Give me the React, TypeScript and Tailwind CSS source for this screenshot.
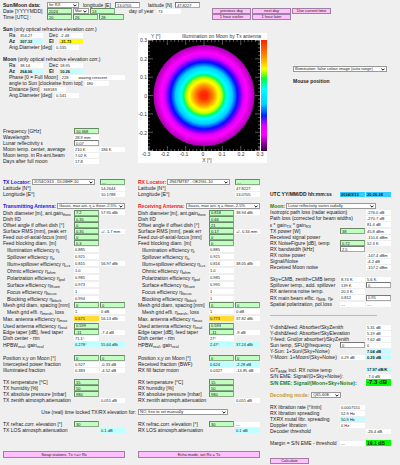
import React, { useId } from 'react';
import clsx from 'clsx';

type Kind = 'out' | 'in' | 'plain' | 'cyan' | 'cyanBold' | 'sky' | 'gold' | 'yellow' | 'green' | 'big';
type Cell = [Kind, string] | null;
type RowData = { label: React.ReactNode; a?: Cell; b?: Cell; tall?: boolean; indent?: boolean; labelClass?: string };

const kinds: Record<Kind, string> = {
  out: 'h-[5px] leading-[5px] bg-white text-[4px]',
  cyan: 'h-[5px] leading-[5px] bg-[#c0ffff] text-[4px]',
  cyanBold: 'h-[5px] leading-[5px] bg-[#c0ffff] font-bold text-[4px]',
  sky: 'h-[5px] leading-[5px] bg-[#33ccff] font-bold text-[4px]',
  gold: 'h-[5px] leading-[5px] bg-[#ffdd33] text-[4px]',
  yellow: 'h-[5px] leading-[5px] bg-[#ffff00] font-bold text-[4px]',
  green: 'h-[6px] leading-[6px] bg-[#00ff00] font-bold text-[5px]',
  big: 'h-[7px] leading-[7px] bg-[#00ff00] font-bold text-[6px]',
  in: 'bg-[#c0ffc0] border-t-[#668866] border-l-[#668866] border-r-[#88a888] border-b-[#88a888]',
  plain: 'bg-white border-t-[#777777] border-l-[#777777] border-r-[#aaaaaa] border-b-[#aaaaaa]',
};

const Box = ({ cell, id, name, className }: { cell: Cell; id?: string; name?: string; className?: string }) => {
  if (!cell) return <span className={className} />;
  const [kind, value] = cell;
  if (kind === 'in' || kind === 'plain') {
    return (
      <input
        id={id}
        aria-label={name}
        defaultValue={value}
        className={clsx('h-[6px] min-w-0 border px-px text-[4px] leading-[4px] text-[#222]', kinds[kind], className)}
      />
    );
  }
  return (
    <output className={clsx('block min-w-0 whitespace-nowrap pl-px text-[#222]', kinds[kind], className)}>
      {value}
    </output>
  );
};

const Row = ({ label, a = null, b = null, tall, indent, labelClass }: RowData) => {
  const id = useId();
  const aIsInput = a && (a[0] === 'in' || a[0] === 'plain');
  return (
    <div className={clsx('grid grid-cols-[minmax(0,1fr)_25px_25px] items-center gap-px', tall ? 'h-[7px]' : 'h-[6px]')}>
      <label htmlFor={id} className={clsx('whitespace-nowrap', indent && 'pl-1', labelClass)}>{label}</label>
      <Box cell={a} id={aIsInput ? id : undefined} />
      <Box cell={b} id={aIsInput ? undefined : id} name={aIsInput ? 'second value' : undefined} />
    </div>
  );
};

const Rows = ({ rows }: { rows: RowData[] }) => <>{rows.map((r, i) => <Row key={i} {...r} />)}</>;

const Select = ({ value, id, label, className }: { value: string; id?: string; label?: string; className?: string }) => (
  <span className={clsx('relative block', className)}>
    <select
      id={id}
      aria-label={label}
      className="block h-[6px] w-full appearance-none border border-[#999999] bg-white pl-px pr-[5px] text-[4px] leading-[4px] text-[#222]"
    >
      <option>{value}</option>
    </select>
    <svg viewBox="0 0 6 4" className="pointer-events-none absolute right-[2px] top-[2px] h-[3px] w-[4px]">
      <path d="M.7.7 3 3 5.3.7" fill="none" stroke="#111" strokeWidth="1.5" />
    </svg>
  </span>
);

const Button = ({ children, className }: { children: React.ReactNode; className?: string }) => (
  <button className={clsx('block border border-[#a080a0] bg-[#ffc0ff] text-center text-[4px] leading-[4px] text-[#222]', className)}>
    {children}
  </button>
);

const Sub = ({ children }: { children: React.ReactNode }) => (
  <sub className="relative bottom-[-1px] align-baseline text-[4px] leading-[0]">{children}</sub>
);

const eff = (name: string, sub: string) => <>{name} efficiency η<Sub>{sub}</Sub></>;

const ticks = Array.from({ length: 31 }, (_, i) => i);

const Plot = () => (
  <svg width="129" height="130" viewBox="0 0 129 130" className="font-[Liberation_Sans,sans-serif] text-[5px]" fill="#333">
    <defs>
      <radialGradient id="beam">
        <stop offset="0" stopColor="#ff2000" />
        <stop offset=".08" stopColor="#ff3000" />
        <stop offset=".2" stopColor="#ff9a00" />
        <stop offset=".29" stopColor="#ffff00" />
        <stop offset=".35" stopColor="#c0ff00" />
        <stop offset=".4" stopColor="#00ff60" />
        <stop offset=".46" stopColor="#00ffff" />
        <stop offset=".56" stopColor="#00d0ff" />
        <stop offset=".66" stopColor="#0010ff" />
        <stop offset=".71" stopColor="#6000ff" />
        <stop offset=".78" stopColor="#e000ff" />
        <stop offset=".85" stopColor="#ff00ff" />
        <stop offset="1" stopColor="#a800b0" />
      </radialGradient>
      <linearGradient id="scale" x2="0" y2="1">
        <stop offset="0" stopColor="#ff2000" />
        <stop offset=".15" stopColor="#ff9000" />
        <stop offset=".26" stopColor="#ffff00" />
        <stop offset=".31" stopColor="#80ff00" />
        <stop offset=".35" stopColor="#00ff40" />
        <stop offset=".44" stopColor="#00ffff" />
        <stop offset=".58" stopColor="#00d0ff" />
        <stop offset=".68" stopColor="#0020ff" />
        <stop offset=".77" stopColor="#e000ff" />
        <stop offset=".85" stopColor="#ff00ff" />
        <stop offset="1" stopColor="#300040" />
      </linearGradient>
    </defs>
    <rect width="129" height="130" fill="#fff" />
    <rect x="10" y="7" width="112" height="111" fill="#000" />
    <circle cx="66" cy="62.5" r="50.5" fill="url(#beam)" />
    <rect x="123" y="7" width="6" height="111" fill="url(#scale)" />
    {ticks.map((i) => {
      const len = i % 5 === 0 ? 5 : 2;
      const x = 11 + i * 3.67;
      const y = 7.5 + i * 3.67;
      return (
        <path
          key={i}
          d={`M${x} 7v${len}M${x} 118v${-len}M10 ${y}h${len}M122 ${y}h${-len}`}
          stroke="#fff"
          strokeWidth=".5"
          opacity=".7"
        />
      );
    })}
    <text x="13" y="5">Y [°]</text>
    <text x="44" y="5">Illumination on Moon by Tx antenna</text>
    {['0.3', '0.2', '0.1', '0', '-0.1', '-0.2'].map((t, i) => (
      <text key={t} x="9" y={9 + i * 18.5} textAnchor="end">{t}</text>
    ))}
    {['-0.3', '-0.2', '-0.1', '0', '0.1', '0.2', '0.3'].map((t, i) => (
      <text key={t} x={8 + i * 19} y="123" textAnchor="middle">{t}</text>
    ))}
    <text x="69" y="129" textAnchor="middle">X [°]</text>
  </svg>
);

const tempRows: RowData[] = [
  { label: 'Frequency [GHz]', a: ['in', '10.368'] },
  { label: 'Wavelength', a: ['out', '28.9 mm'] },
  { label: 'Lunar reflectivity ε', a: ['plain', '0.07'] },
  { label: 'Moon temp. center, average', a: ['out', '210 K'], b: ['out', '186 K'] },
  { label: 'Moon temp. in Rx-ant.beam', a: ['out', '7.02 K'] },
  { label: 'Days after full moon', a: ['out', '17.8'] },
];

type Station = {
  dir: string; locator: string; select: string; lat: string; lon: string; title: string; antenna: string; color: string;
  gain: [string, string]; fd: string; offset: string; rms: [string, string]; focus: string; block: string; spill: [string, string];
  surface: string; blocking: string; max: [string, string]; used: string; taper: string; center: string; hpbw: [string, string];
};

const tx: Station = {
  dir: 'TX', locator: 'TX Locator:', select: 'JO54CG13 - DL0SHF-10', lat: '54.2644', lon: '10.1788',
  title: 'Transmitting Antenna:', antenna: 'Gauss, max ant. η = theor.-2.5%', color: 'font-bold text-[#2020dd]',
  gain: ['7.2', '57.95 dBi'], fd: '0.35', offset: '0', rms: ['0.35', '+/- 1.7 mm'], focus: '0', block: '0.3',
  spill: ['0.815', '56.97 dBi'], surface: '0.973', blocking: '0.994', max: ['0.671', '56.13 dBi'], used: '0.599',
  taper: '-7.4 dB', center: '71.1°', hpbw: ['0.278°', '55.64 dBi'],
};

const rx: Station = {
  dir: 'RX', locator: 'RX Locator:', select: 'JN67MT87 - OE2IGL-10', lat: '47.8227', lon: '13.0705',
  title: 'Receiving Antenna:', antenna: 'Gauss, max ant. η = theor.-2.5%', color: 'font-bold text-[#ee1c1c]',
  gain: ['0.818', '38.94 dBi'], fd: '0.66', offset: '21', rms: ['0.17', '+/- 0.34 mm'], focus: '0', block: '0',
  spill: ['0.816', '38.05 dBi'], surface: '0.995', blocking: '1', max: ['0.773', '37.82 dBi'], used: '0.593',
  taper: '-9 dB', center: '27°', hpbw: ['2.47°', '37.24 dBi'],
};

const StationPanel = ({ s }: { s: Station }) => {
  const id = useId();
  return (
    <section className="min-w-0">
      <div className="grid h-[6px] grid-cols-[minmax(0,1fr)_25px] items-center gap-[5px]">
        <div className="flex items-center gap-px">
          <label htmlFor={id} className={clsx('whitespace-nowrap', s.color)}>{s.locator}</label>
          <Select id={id} value={s.select} className="min-w-0 flex-1" />
        </div>
        <Box cell={['in', '---']} name={`${s.dir} locator`} />
      </div>
      <Row label="Latitude [N°]" b={['out', s.lat]} />
      <Row label="Longitude [E°]" b={['out', s.lon]} />
      <div className="mt-[6px] flex h-[6px] items-center gap-px">
        <label htmlFor={id + 'a'} className={clsx('whitespace-nowrap', s.color)}>{s.title}</label>
        <Select id={id + 'a'} value={s.antenna} className="min-w-0 flex-1" />
      </div>
      <Rows
        rows={[
          { label: <>Dish diameter [m], ant.gain<Sub>theo</Sub></>, a: ['in', s.gain[0]], b: ['out', s.gain[1]], tall: true },
          { label: 'Dish f/D', a: ['in', s.fd] },
          { label: 'Offset angle if offset dish [°]', a: ['in', s.offset] },
          { label: 'Surface RMS [mm], peak err', a: ['in', s.rms[0]], b: ['out', s.rms[1]] },
          { label: 'Feed out-of-axial-focus [mm]', a: ['in', s.focus] },
          { label: 'Feed blocking diam. [m]', a: ['in', s.block] },
          { label: eff('Illumination', 'i'), a: ['out', '0.885'], tall: true, indent: true },
          { label: eff('Spillover', 's'), a: ['out', '0.921'], tall: true, indent: true },
          { label: eff('Illum+spillover', 'i+s'), a: ['out', s.spill[0]], b: ['out', s.spill[1]], tall: true, indent: true },
          { label: eff('Ohmic', 'ohm'), a: ['out', '1.0'], tall: true, indent: true },
          { label: eff('Polarization', 'pol'), a: ['out', '0.985'], tall: true, indent: true },
          { label: eff('Surface', 'Ruze'), a: ['out', s.surface], tall: true, indent: true },
          { label: eff('Focus', 'focus'), a: ['out', '1'], tall: true, indent: true },
          { label: eff('Blocking', 'block'), a: ['out', s.blocking], tall: true, indent: true },
          { label: 'Mesh grid diam, spacing [mm]', a: ['in', '0'], b: ['in', '0'] },
          { label: <>Mesh grid effi. η<Sub>mesh</Sub>, loss</>, a: ['out', '1'], b: ['out', '0 dB'], tall: true, indent: true },
          { label: <>Max. antenna efficiency η<Sub>max</Sub></>, a: ['gold', s.max[0]], b: ['out', s.max[1]], tall: true },
          { label: <>Used antenna efficiency η<Sub>real</Sub></>, a: ['in', s.used], tall: true },
          { label: 'Edge taper [dB], feed taper', a: ['in', '-11'], b: ['out', s.taper] },
          { label: 'Dish center - rim', a: ['out', s.center] },
          { label: <>HPBW<Sub>real</Sub>, gain<Sub>real</Sub></>, a: ['cyan', s.hpbw[0]], b: ['cyan', s.hpbw[1]], tall: true },
        ]}
      />
      <div className="mt-[7px]">
        <Rows
          rows={s.dir === 'TX' ? [
            { label: 'Position x,y on Moon [°]', a: ['in', '0'], b: ['in', '0'] },
            { label: 'Intercepted power fraction', a: ['out', '0.927'], b: ['out', '-0.33 dB'] },
            { label: 'Illuminated fraction', a: ['out', '0.383'], b: ['out', '-4.52 dB'] },
          ] : [
            { label: 'Position x,y on Moon [°]', a: ['in', '0'], b: ['in', '0'] },
            { label: 'Received fraction (BWF)', a: ['cyan', '0.624'], b: ['cyan', '-2.28 dB'] },
            { label: 'RX fill factor moon', a: ['out', '0.0327'], b: ['out', '-14.85 dB'] },
          ]}
        />
      </div>
      <div className="mt-[6px]">
        <Rows
          rows={[
            { label: `${s.dir} temperature [°C]`, a: ['in', '15'] },
            { label: `${s.dir} humidity [%]`, a: ['in', '50'] },
            { label: `${s.dir} absolute pressure [mbar]`, a: ['in', '980'] },
            { label: `${s.dir} zenith atmosph.attenuation`, b: ['out', '0.051 dB'] },
          ]}
        />
      </div>
    </section>
  );
};

const Elevation = ({ dir, b }: { dir: string; b: Cell }) => (
  <div>
    <Row label={`${dir} refrac.corr. elevation [°]`} a={['in', '30']} b={b} />
    <Row label={`${dir} LOS atmosph.attenuation`} b={['cyan', '0.1 dB']} />
  </div>
);

const linkRows: RowData[] = [
  { label: 'Isotropic path loss (radar equation)', b: ['out', '-276.0 dB'] },
  { label: 'Path loss (corrected for beam widths)', b: ['out', '-270.7 dB'] },
  { label: <>ε * gain<Sub>TX</Sub> * gain<Sub>RX</Sub></>, b: ['out', '81.4 dB'], tall: true },
  { label: 'TX power [W]', a: ['in', '38'], b: ['out', '45.8 dBm'] },
  { label: 'Received signal power', b: ['out', '-151.6 dBm'] },
  { label: 'RX NoiseFigure [dB], temp', a: ['in', '0.72'], b: ['out', '52.3 K'] },
  { label: 'RX bandwidth [kHz]', a: ['plain', '2.5'] },
  { label: 'RX noise power', b: ['out', '-147.4 dBm'] },
  { label: 'Signal/Noise', b: ['out', '-4.2 dB'] },
  { label: 'Received Moon noise', b: ['out', '-157.2 dBm'] },
];

const noiseRows: RowData[] = [
  { label: 'Sky+CMB, zenith+CMB temp', a: ['out', '8.74 K'], b: ['out', '5.6 K'] },
  { label: 'Spillover temp., add. spillover', a: ['out', '139 K'], b: ['plain', '0'] },
  { label: 'RX antenna noise temp.', a: ['out', '20.3 K'] },
  { label: <>RX main beam effic. η<Sub>MB</Sub>, η<Sub>F</Sub></>, a: ['out', '0.812'], b: ['plain', '0.95'], tall: true },
  { label: 'Spatial polarization, pol.loss', a: ['out', '---'], b: ['out', '---'] },
];

const yRows: RowData[] = [
  { label: 'Y-dish&feed: Absorber/SkyZenith', b: ['out', '5.31 dB'] },
  { label: 'Y-dish&feed: Absorber/SkyElevation', b: ['out', '5.19 dB'] },
  { label: 'Y-feed: Gnd(or absorber)/SkyZenith', b: ['out', '7.62 dB'] },
  { label: 'Sun temp, SFU@frequency', a: ['plain', '0'], b: ['out', '0'] },
  { label: 'Y-Sun: 1+Sun/(Sky+Noise)', b: ['cyanBold', '7.04 dB'] },
  { label: 'Y-Moon: 1+Moon/(Sky+Noise)', a: ['out', '0.29 dB'], b: ['cyanBold', '0.29 dB'] },
];

const librationRows: RowData[] = [
  { label: 'RX libration rate [°/min]', a: ['out', '0.0007551'] },
  { label: 'RX libration spreading', a: ['out', '52.9 Hz'] },
  { label: 'TXRX mutal libr. spreading', a: ['cyan', '50.9 Hz'] },
  { label: 'Doppler libration', a: ['out', '0 Hz'] },
  { label: 'Decoder threshold', b: ['out', '-26.4 dB'] },
];

const Pair = ({ items }: { items: [string, Cell, string?][] }) => (
  <div className="flex h-[6px] items-center pl-[6px]">
    {items.map(([label, cell, bold]) => (
      <div key={label} className="flex w-10 items-center">
        <span className={clsx('w-[10px]', bold)}>{label}</span>
        <Box cell={cell} className="w-6" />
      </div>
    ))}
  </div>
);

const Line = ({ label, children }: { label: string; children: React.ReactNode }) => (
  <div className="flex h-[6px] items-center gap-[3px] whitespace-nowrap pl-[6px]">
    <span>{label}</span>
    {children}
  </div>
);

const App = () => (
  <main className="min-h-screen bg-[#efefef] pl-[3px] pr-[9px] pt-[2px] font-[Liberation_Sans,sans-serif] text-[5px] leading-[6px] text-[#222]">
    <header className="flex">
      <div className="w-[209px] shrink-0">
        <div className="flex h-[6px] items-center">
          <label htmlFor="station" className="w-11 font-bold">Sun/Moon data:</label>
          <Select id="station" value="for RX" className="w-8" />
          <label htmlFor="lon" className="w-9 pl-1">longitude [E]</label>
          <Box id="lon" cell={['plain', '13.0705']} className="w-[25px]" />
          <label htmlFor="lat" className="w-[35px] pl-2">latitude [N]</label>
          <Box id="lat" cell={['plain', '47.8227']} className="w-[25px]" />
        </div>
        <div className="flex h-[6px] items-center">
          <label htmlFor="year" className="w-11">Date [YYYYMDD]</label>
          <Box id="year" cell={['in', '2024']} className="w-[25px]" />
          <Select label="Month" value="Mar" className="ml-px w-4" />
          <Box name="Day" cell={['in', '13']} className="ml-px w-[25px]" />
          <span className="ml-[14px] w-7 whitespace-nowrap">day of year</span>
          <Box cell={['out', '73']} className="w-6" />
        </div>
        <div className="flex h-[6px] items-center gap-px">
          <label htmlFor="hour" className="w-[43px]">Time [UTC] :</label>
          <Box id="hour" cell={['in', '20']} className="w-[25px]" />
          <Box name="Minutes" cell={['in', '26']} className="w-[25px]" />
          <Box name="Seconds" cell={['in', '28']} className="w-[25px]" />
        </div>
      </div>
      <div className="grid h-[18px] grid-cols-[39px_39px_39px] content-start gap-x-px pt-[6px]">
        <Button className="h-[6px]">previous day</Button>
        <Button className="h-[6px]">next day</Button>
        <Button className="h-[6px]">Use current time</Button>
        <Button className="h-[6px]">1 hour earlier</Button>
        <Button className="h-[6px]">1 hour later</Button>
      </div>
    </header>

    <div className="flex">
      <div className="mr-[13px] w-[122px] shrink-0 pt-[6px]">
        <div><b>Sun</b> (only optical refractive elevation corr.)</div>
        <Pair items={[['Ra', ['out', '354.27']], ['Dec', ['out', '-2.48']]]} />
        <Pair items={[['Az', ['cyanBold', '307.32'], 'font-bold'], ['El', ['yellow', '-31.73'], 'font-bold']]} />
        <Line label="Ang.Diameter [deg]"><Box cell={['out', '0.535']} className="w-6" /></Line>
        <div className="mt-[6px]"><b>Moon</b> (only optical refractive elevation corr.)</div>
        <Pair items={[['Ra', ['out', '38.14']], ['Dec', ['out', '18.95']]]} />
        <Pair items={[['Az', ['cyanBold', '264.06'], 'font-bold'], ['El', ['cyanBold', '10.26'], 'font-bold']]} />
        <Line label="Phase [0 = Full Moon]">
          <output className="flex h-[5px] flex-1 gap-[10px] bg-white pl-px text-[4px] leading-[5px]">
            <span>228</span>
            <span>waxing crescent</span>
          </output>
        </Line>
        <Line label="angle to Sun [clockwise from top]"><Box cell={['out', '180']} className="w-6" /></Line>
        <Line label="Distance [km]"><Box cell={['out', '368183']} className="w-6" /></Line>
        <Line label="Ang.Diameter [deg]"><Box cell={['out', '0.541']} className="w-6" /></Line>
        <div className="mt-[30px]"><Rows rows={tempRows} /></div>
      </div>
      <div className="shrink-0 pt-[13px]"><Plot /></div>
      <div className="ml-[26px] w-[94px] pt-[46px]">
        <Select label="Image" value="Illumination: false colour image (auto range)" />
        <div className="mt-[6px] font-bold">Mouse position</div>
      </div>
    </div>

    <div className="mt-[15px] grid grid-cols-[257fr_121fr] gap-[10px]">
      <div className="min-w-0">
        <div className="grid grid-cols-2 gap-[13px]">
          <StationPanel s={tx} />
          <StationPanel s={rx} />
        </div>
        <div className="mt-[6px] grid h-[6px] grid-cols-2 items-center gap-[13px]">
          <label htmlFor="lock" className="-mr-[11px] whitespace-nowrap text-right">Use (real) time locked TX/RX elevation for:</label>
          <Select id="lock" value="NO, free to set manually" className="w-[90px]" />
        </div>
        <div className="mt-[6px] grid grid-cols-2 gap-x-[13px] gap-y-[18px]">
          <Elevation dir="TX" b={null} />
          <Elevation dir="RX" b={['out', '---']} />
          <Button className="h-[7px]">Swap stations, Tx &lt;=&gt; Rx</Button>
          <Button className="h-[7px]">Echo mode, set Rx = Tx</Button>
        </div>
      </div>

      <section className="min-w-0 pt-[12px]">
        <Row label="UTC YY/MM/DD hh:mm:ss" labelClass="font-bold" a={['sky', '2024/3/13']} b={['sky', '20:26:28']} />
        <div className="mt-[6px] flex h-[6px] items-center gap-px">
          <label htmlFor="moon" className="font-bold text-[#208020]">Moon:</label>
          <Select id="moon" value="Lunar reflectivity varies radially" className="w-[90px]" />
        </div>
        <Rows rows={linkRows} />
        <div className="mt-[6px]"><Rows rows={noiseRows} /></div>
        <hr className="my-2 mr-[14px] border-[#bbbbbb]" />
        <div><Rows rows={yRows} /></div>
        <div className="mt-[6px]">
          <Row label={<>G/T<Sub>EME</Sub> incl. RX noise temp</>} b={['cyanBold', '17.97 dB/K']} tall />
          <Row label="S/N EME: Signal/(0+Sky+Noise):" b={['out', '-7.0 dB']} />
          <Row label="S/N EME: Signal/(Moon+Sky+Noise):" labelClass="font-bold text-[#208020]" b={['big', '-7.3 dB']} tall />
        </div>
        <div className="mt-[6px] flex h-[6px] items-center gap-[2px]">
          <label htmlFor="decode" className="font-bold text-[#c89a30]">Decoding mode:</label>
          <Select id="decode" value="Q65-60E" className="w-[30px]" />
        </div>
        <div className="mt-[6px]"><Rows rows={librationRows} /></div>
        <div className="mt-[6px]">
          <Row label="Margin = S/N EME - threshold" a={['out', '---']} b={['green', '19.1 dB']} />
        </div>
        <Button className="mt-[12px] h-[6px] w-[39px]">Calculate</Button>
      </section>
    </div>
  </main>
);

export default App;
